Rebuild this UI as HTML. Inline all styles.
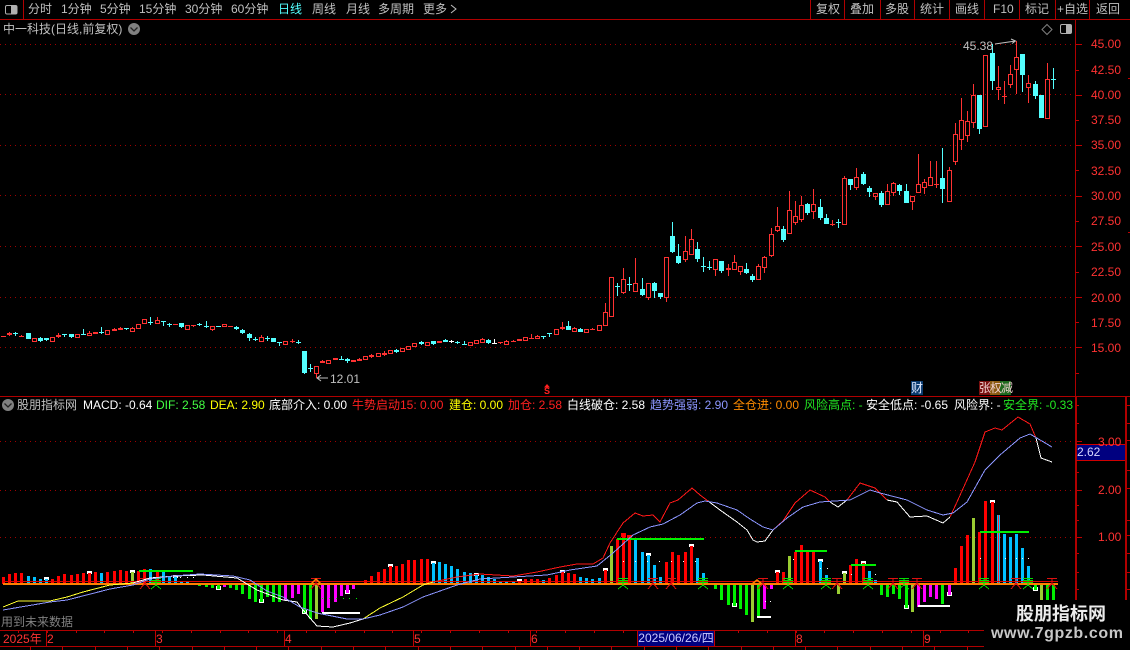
<!DOCTYPE html>
<html lang="zh">
<head>
<meta charset="utf-8">
<title>股朋指标网</title>
<style>
html,body{margin:0;padding:0;background:#000;}
#p{position:relative;width:1130px;height:650px;overflow:hidden;background:#000;font:12px/14px "Liberation Sans","WenQuanYi Zen Hei","Noto Sans CJK SC",sans-serif;color:#c0c0c0;}
#p svg{position:absolute;left:0;top:0;}
.t{position:absolute;white-space:pre;}
.r{color:#ff3232;}
</style>
</head>
<body>
<div id="p">
<svg id="s" width="1130" height="650" viewBox="0 0 1130 650" shape-rendering="crispEdges">
  <g fill="#b00000">
    <rect x="0" y="19" width="1130" height="1"/>
    <rect x="23" y="0" width="1" height="19"/>
    <rect x="810" y="0" width="1" height="19"/><rect x="844" y="0" width="1" height="19"/>
    <rect x="880" y="0" width="1" height="19"/><rect x="914" y="0" width="1" height="19"/>
    <rect x="949" y="0" width="1" height="19"/><rect x="984" y="0" width="1" height="19"/>
    <rect x="1019" y="0" width="1" height="19"/><rect x="1055" y="0" width="1" height="19"/>
    <rect x="1089" y="0" width="1" height="19"/>
    <rect x="0" y="396" width="1130" height="1"/>
    <rect x="1075" y="20" width="1" height="376"/>
    <rect x="1075" y="396" width="2" height="204"/>
    <rect x="1125" y="396" width="2" height="204"/>
    <rect x="0" y="630" width="984" height="1"/>
    <rect x="0" y="646" width="984" height="1"/>
  </g>
  <g id="grid" stroke="#a00000" stroke-width="1" stroke-dasharray="1 4" fill="none">
    <path d="M0 44.5H1075M0 94.5H1075M0 145.5H1075M0 195.5H1075M0 246.5H1075M0 297.5H1075M0 347.5H1075"/>
    <path d="M0 441.5H1075M0 490.5H1075M0 537.5H1075"/>
  </g>
  <!-- small window icons -->
  <g shape-rendering="auto">
    <rect x="5.5" y="5.5" width="11.5" height="8.5" rx="1.5" fill="#000" stroke="#b0b0b0"/>
    <rect x="11" y="6" width="5.5" height="7.5" fill="#b0b0b0"/>
    <rect x="1060.5" y="24.5" width="11" height="9" rx="1.5" fill="#000" stroke="#b0b0b0"/>
    <rect x="1066" y="25" width="5" height="8" fill="#b0b0b0"/>
    <path d="M1047 24.5L1052 29.5L1047 34.5L1042 29.5Z" fill="none" stroke="#808080"/>
    <circle cx="134" cy="29" r="6" fill="#808080"/>
    <path d="M130.5 27.5L134 31L137.5 27.5" fill="none" stroke="#222" stroke-width="1.3"/>
    <circle cx="8" cy="405" r="6" fill="#808080"/>
    <path d="M4.5 403.5L8 407L11.5 403.5" fill="none" stroke="#222" stroke-width="1.3"/>
    <path d="M995 44L1015.5 41M1011 39L1015.5 41L1012 43.5" fill="none" stroke="#c0c0c0"/>
    <path d="M328 378H317M321 375L317 378L321 381" fill="none" stroke="#c0c0c0"/>
    <path d="M547 384L550 387.5H544Z" fill="#ff2020"/>
    <path d="M451 5L456 9L451 13" fill="none" stroke="#c0c0c0"/>
  </g>
  <g id="cd"></g>
  <g id="bars"></g>
  <rect x="3" y="581" width="1055" height="1" fill="#e00000"/>
  <rect x="3" y="583" width="1055" height="2" fill="#ff8000"/>
  <g fill="#00f000">
    <rect x="139" y="570" width="54" height="2"/><rect x="617" y="538" width="87" height="2"/>
    <rect x="795" y="550" width="32" height="2"/><rect x="851" y="564" width="25" height="2"/>
    <rect x="980" y="531" width="49" height="2"/>
  </g>
  <g fill="#fff">
    <rect x="322" y="612" width="38" height="2"/><rect x="757" y="616" width="14" height="2"/><rect x="918" y="605" width="32" height="2"/>
  </g>
  <g id="dots"></g>
  <g id="marks" fill="none" stroke-width="1"></g>
  <g fill="none" stroke-width="1">
    <polyline stroke="#ffff30" points="3,607 18,601 50,601 67,597 83,592 110,585 133,583"/>
    <polyline stroke="#ffff30" points="363,619 380,608 403,597 423,585 433,582"/>
    <polyline stroke="#ff1818" points="433,582 457,577 480,574 513,576 537,572 560,567 577,564 593,564 603,558 610,543 623,523 635,513 643,516 653,515 660,522 670,503 678,500 692,488 700,495 708,501"/>
    <polyline stroke="#ff1818" points="773,530 783,521 795,503 810,490 825,497 830,502"/>
    <polyline stroke="#ff1818" points="847,500 860,483 875,488 887,500"/>
    <polyline stroke="#ff1818" points="950,517 957,502 975,462 985,432 995,428 1002,430 1018,417 1030,424 1036,438"/>
    <polyline stroke="#fff" points="133,583 150,578 175,576 203,575 237,578 257,590 283,600 297,602 303,610 317,626 333,627 350,623 363,619"/>
    <polyline stroke="#fff" points="708,501 720,510 737,522 747,530 753,540 757,542 765,541 773,530"/>
    <polyline stroke="#fff" points="830,502 838,507 847,500"/>
    <polyline stroke="#fff" points="887,500 897,502 910,517 927,516 943,523 950,517"/>
    <polyline stroke="#fff" points="1036,438 1041,458 1052,462"/>
    <polyline stroke="#8c96ff" points="3,610 50,602 67,600 110,589 133,585 150,579 173,576 200,574 233,576 250,580 267,591 283,597 300,607 317,613 347,619 363,619 380,615 403,607 423,597 457,585 480,579 513,577 547,575 570,570 597,566 613,553 633,535 650,527 663,524 680,515 697,503 705,501 717,503 737,510 750,519 763,527 773,530 787,518 803,507 820,502 850,500 870,490 880,493 907,500 927,510 943,515 953,513 967,502 985,470 1000,455 1020,438 1030,434 1052,447"/>
  </g>
  <g shape-rendering="auto" fill="none" stroke="#ff8000" stroke-width="1.5">
    <path d="M311 584L316 579L321 584M752 584L757 580L762 584"/>
  </g>
  <g id="ticks"></g>
  <rect x="1077" y="444" width="48" height="16" fill="#000080"/>
  <rect x="1076" y="444" width="49" height="1" fill="#d00000"/>
  <rect x="1076" y="460" width="49" height="1" fill="#d00000"/>
  <g fill="#8a3a00">
    <rect x="911" y="381" width="12" height="14" fill="#0a3a6e"/>
    <rect x="979" y="381" width="11" height="14" fill="#7a1010"/>
    <rect x="990" y="381" width="10" height="14" fill="#8a5a10"/>
    <rect x="1000" y="381" width="11" height="14" fill="#1e6a1e"/>
  </g>
  <rect x="984" y="600" width="146" height="50" fill="#000"/>
</svg>

<span class="t" style="left:28px;top:2px">分时</span>
<span class="t" style="left:61px;top:2px">1分钟</span>
<span class="t" style="left:100px;top:2px">5分钟</span>
<span class="t" style="left:139px;top:2px">15分钟</span>
<span class="t" style="left:185px;top:2px">30分钟</span>
<span class="t" style="left:231px;top:2px">60分钟</span>
<span class="t" style="left:278px;top:2px;color:#54ffff">日线</span>
<span class="t" style="left:312px;top:2px">周线</span>
<span class="t" style="left:346px;top:2px">月线</span>
<span class="t" style="left:378px;top:2px">多周期</span>
<span class="t" style="left:423px;top:2px">更多</span>

<span class="t" style="left:816px;top:2px">复权</span>
<span class="t" style="left:850px;top:2px">叠加</span>
<span class="t" style="left:885px;top:2px">多股</span>
<span class="t" style="left:920px;top:2px">统计</span>
<span class="t" style="left:955px;top:2px">画线</span>
<span class="t" style="left:993px;top:2px">F10</span>
<span class="t" style="left:1025px;top:2px">标记</span>
<span class="t" style="left:1057px;top:2px">+自选</span>
<span class="t" style="left:1096px;top:2px">返回</span>

<span class="t" style="left:3px;top:22px">中一科技(日线,前复权)</span>

<span class="t" style="left:963px;top:39px">45.38</span>
<span class="t" style="left:330px;top:372px">12.01</span>

<span class="t r" style="left:1091px;top:37px">45.00</span>
<span class="t r" style="left:1091px;top:63px">42.50</span>
<span class="t r" style="left:1091px;top:88px">40.00</span>
<span class="t r" style="left:1091px;top:113px">37.50</span>
<span class="t r" style="left:1091px;top:138px">35.00</span>
<span class="t r" style="left:1091px;top:164px">32.50</span>
<span class="t r" style="left:1091px;top:189px">30.00</span>
<span class="t r" style="left:1091px;top:214px">27.50</span>
<span class="t r" style="left:1091px;top:240px">25.00</span>
<span class="t r" style="left:1091px;top:265px">22.50</span>
<span class="t r" style="left:1091px;top:291px">20.00</span>
<span class="t r" style="left:1091px;top:316px">17.50</span>
<span class="t r" style="left:1091px;top:341px">15.00</span>

<span class="t" style="left:544px;top:387px;color:#ff2020;font-size:9px;line-height:9px;font-weight:bold">S</span>
<span class="t" style="left:911px;top:381px;color:#dfe8ff">财</span>
<span class="t" style="left:979px;top:381px;color:#f0d0d0;letter-spacing:-1px">张权减</span>

<span class="t" style="left:17px;top:398px">股朋指标网</span>
<span class="t" style="left:83px;top:398px;color:#fff">MACD: -0.64</span>
<span class="t" style="left:156px;top:398px;color:#44ff44">DIF: 2.58</span>
<span class="t" style="left:210px;top:398px;color:#ffff00">DEA: 2.90</span>
<span class="t" style="left:269px;top:398px;color:#fff">底部介入: 0.00</span>
<span class="t" style="left:352px;top:398px;color:#ff2020">牛势启动15: 0.00</span>
<span class="t" style="left:449px;top:398px;color:#ffff00">建仓: 0.00</span>
<span class="t" style="left:508px;top:398px;color:#ff2020">加仓: 2.58</span>
<span class="t" style="left:567px;top:398px;color:#fff">白线破仓: 2.58</span>
<span class="t" style="left:650px;top:398px;color:#8c96ff">趋势强弱: 2.90</span>
<span class="t" style="left:733px;top:398px;color:#ff8c00">全仓进: 0.00</span>
<span class="t" style="left:804px;top:398px;color:#22e622">风险高点: -</span>
<span class="t" style="left:866px;top:398px;color:#fff">安全低点: -0.65</span>
<span class="t" style="left:954px;top:398px;color:#fff">风险界: -</span>
<span class="t" style="left:1003px;top:398px;color:#22e622">安全界: -0.33</span>

<span class="t r" style="left:1098px;top:435px">3.00</span>
<span class="t" style="left:1077px;top:445px;color:#d8d8ff">2.62</span>
<span class="t r" style="left:1098px;top:483px">2.00</span>
<span class="t r" style="left:1098px;top:530px">1.00</span>

<span class="t" style="left:1px;top:615px;color:#808080">用到未来数据</span>
<span class="t r" style="left:3px;top:632px">2025年</span>
<span class="t r" style="left:47px;top:632px">2</span>
<span class="t r" style="left:156px;top:632px">3</span>
<span class="t r" style="left:285px;top:632px">4</span>
<span class="t r" style="left:414px;top:632px">5</span>
<span class="t r" style="left:531px;top:632px">6</span>
<span class="t" style="left:637px;top:631px;width:76px;height:15px;background:#00007f;color:#c8c8ff;text-align:center;border-left:1px solid #c00000;border-right:1px solid #c00000">2025/06/26/四</span>
<span class="t r" style="left:796px;top:632px">8</span>
<span class="t r" style="left:924px;top:632px">9</span>

<span class="t" style="left:1016px;top:603px;color:#ececec;font-size:18px;line-height:22px;font-weight:bold">股朋指标网</span>
<span class="t" style="left:991px;top:625px;color:#c8c8c8;font-size:16px;line-height:18px;font-weight:bold;letter-spacing:0.6px">www.7gpzb.com</span>
</div>
<script>
(function(){
var NS="http://www.w3.org/2000/svg";
function X(i){return Math.floor(3.5+6.14*i);}
function R(g,x,y,w,h,f){var r=document.createElementNS(NS,"rect");r.setAttribute("x",x);r.setAttribute("y",y);r.setAttribute("width",w);r.setAttribute("height",h);r.setAttribute("fill",f);g.appendChild(r);}
var RED="#ff3232",CY="#54ffff",WH="#ffffff";
var C=[[336,336,336,337,1],[333,335,332,336,1],[333,334,332,336,2],[336,336,335,337,1],[333,339,333,339,2],[338,341,338,342,0],[338,341,337,342,2],[338,340,338,341,2],[337,341,337,341,0],[335,337,333,338,1],
[334,334,334,337,2],[334,337,334,338,2],[334,337,334,337,0],[334,334,329,335,2],[333,335,331,335,0],[332,334,332,334,1],[332,333,327,334,2],[330,334,330,334,0],[329,331,328,331,1],[328,329,327,330,0],
[328,328,328,330,2],[328,331,327,331,0],[324,328,324,328,0],[319,323,319,323,0],[322,323,317,325,2],[320,323,317,323,0],[321,321,321,326,2],[324,324,323,327,2],[324,324,324,324,1],[323,327,323,328,2],
[325,329,325,329,0],[325,326,325,327,1],[324,325,323,326,2],[326,326,321,328,2],[326,329,326,331,0],[326,326,326,327,2],[324,326,324,326,0],[326,326,326,327,1],[327,329,326,330,2],[330,333,329,334,2],
[334,338,333,341,2],[339,339,337,341,2],[337,341,335,341,0],[338,338,336,341,2],[338,342,338,342,2],[342,342,342,346,2],[341,344,341,344,0],[341,341,339,343,1],[342,342,340,344,2],[351,373,351,374,2],
[368,368,364,372,2],[366,373,366,378,0],[361,363,360,363,1],[360,363,360,363,0],[358,360,358,360,1],[359,359,356,360,2],[359,361,358,363,2],[360,362,360,362,1],[359,361,358,361,1],[356,359,356,359,0],
[355,357,354,358,1],[353,356,353,356,0],[353,355,351,356,1],[350,353,350,353,0],[350,352,349,353,2],[348,351,348,351,0],[346,349,346,349,0],[343,346,343,346,0],[342,344,341,345,2],[342,345,342,345,0],
[341,344,341,345,2],[341,343,341,343,1],[340,342,339,342,2],[341,341,340,343,3],[342,342,341,344,2],[344,344,341,345,2],[342,345,342,345,0],[340,343,340,343,0],[339,342,338,342,0],[340,343,339,344,2],
[343,343,339,344,3],[342,342,342,344,1],[341,344,340,344,0],[341,341,340,342,1],[339,341,339,341,1],[337,340,337,341,0],[338,338,334,339,1],[336,338,335,338,0],[336,336,336,339,2],[333,333,333,337,2],
[329,334,329,334,0],[327,329,322,330,1],[326,330,321,330,2],[328,331,327,331,0],[329,332,328,332,2],[329,332,329,333,0],[329,329,328,330,1],[325,330,325,331,0],[312,325,303,326,0],[277,316,277,316,0],
[286,286,283,296,2],[279,292,268,294,0],[284,284,277,291,2],[283,291,258,291,0],[289,295,278,296,2],[283,297,283,300,0],[283,291,282,298,2],[293,297,293,299,2],[257,297,257,302,0],[236,252,222,253,2],
[256,263,244,264,2],[251,259,236,262,0],[239,254,229,254,0],[249,259,242,262,2],[266,266,257,272,2],[267,267,261,270,2],[259,269,259,276,0],[261,271,261,273,2],[268,270,264,276,1],[262,269,255,269,0],
[266,271,266,275,0],[269,273,263,274,2],[276,280,274,282,2],[266,279,264,280,0],[257,267,256,273,0],[234,255,228,257,0],[226,230,207,232,0],[229,240,226,242,2],[210,233,191,233,0],[216,222,201,225,0],
[205,219,196,222,0],[204,213,203,215,2],[204,211,189,219,0],[207,218,199,220,2],[218,224,214,224,2],[224,224,220,226,1],[222,222,219,228,2],[178,224,176,224,0],[179,185,179,190,2],[177,187,168,190,0],
[174,184,172,185,2],[188,192,186,197,2],[193,196,193,200,0],[193,205,191,207,2],[191,204,184,205,0],[183,192,182,196,0],[185,191,184,195,2],[191,203,184,203,2],[196,201,196,210,0],[184,192,154,192,0],
[182,187,179,194,0],[177,185,161,185,0],[184,184,161,188,1],[178,189,148,203,2],[170,201,167,201,0],[134,161,123,165,0],[120,139,98,150,0],[121,135,111,142,0],[95,122,84,128,0],[95,129,95,134,2],
[55,126,55,127,0],[53,81,44,90,2],[87,89,66,100,0],[96,97,81,104,1],[74,84,65,88,0],[57,69,41,94,0],[54,75,54,92,2],[83,87,75,103,0],[84,96,81,99,2],[95,118,95,118,2],[79,118,63,118,0],[79,79,68,89,2]];
var g=document.getElementById("cd");
C.forEach(function(c,i){
  var x=X(i),t=c[0],b=c[1],h=c[2],l=c[3],k=c[4];
  var col=k==2?CY:(k==3?WH:RED);
  if(h<t)R(g,x,h,1,t-h,col);
  if(l>b)R(g,x,b,1,l-b,col);
  if(k==0){
    R(g,x-2,t,5,1,col);R(g,x-2,b,5,1,col);R(g,x-2,t,1,b-t+1,col);R(g,x+2,t,1,b-t+1,col);
  }else{
    R(g,x-2,t,5,Math.max(b-t,1),col);
  }
});
var S=("577r 574r 573r 573r 576b 577b 579b 578b* 579r 576r 574r 575r 574r 573r 572r* 572r 573b 572r 571r 570r 571r 571o* 571r 569r 569b 570r 572b 576b 576b* 581b 582b - "+
"586g 587g 588g 589g* 587m 588g 590g 594g 599g 602g 602g* 597g 602g 602g 600m 598m 594m 613g* 619g 619o 612m 608m 602m 596m 593m* 589m - 580r 576r 572r "+
"569r 565r* 566r 564r 560r 560r 559r 559r 562b* 562b 564b 566b 569b 572b 573b 574b* 575b 577b 579b 581b 582b 582b 580r* 579r 579r 579r 580b 578r 575r 571r* 573r 574r 577b 578b 579b 578b 569r* 546o 539r 533r 535r 539b 552b 554b* 565b 577b 562r 552r 555r 552r 545r* 558b 573b - "+
"589g 600g 605g 606g* 609g 615g 622o 618g 609m 589m 571r* 572r 556o 552r 545r 550r 552r 560b* 575b - 594o 572o* 565r 559r 562r* 571b 580b 595g 597g 594g 599g 608g* 612o 607m 602m 597m 599m 604g 595m* 568r 546r 535r 518o 532r 501r 501r* 515b 534b 537b 534b 548b 566b 590g* 600o 600g 600g").split(" ");
var cols={r:"#ff0000",b:"#00c0ff",g:"#00f000",m:"#ff00ff",o:"#9acd32"};
var bg=document.getElementById("bars");
S.forEach(function(s,i){
  if(s=="-")return;
  var y=parseInt(s,10),k=s.charAt(3),cap=s.charAt(4)=="*",x=X(i);
  var z=584;
  if(y<z)R(bg,x-1,y,3,z-y,cols[k]);else R(bg,x-1,z,3,y-z,cols[k]);
  if(cap){
    if(y<z){R(bg,x-2,y-1,5,3,"#fff");R(bg,x-1,y+1,3,1,cols[k]);}
    else{R(bg,x-2,y-3,1,4,"#fff");R(bg,x+2,y-3,1,4,"#fff");R(bg,x-2,y,5,1,"#fff");}
  }
  if(i==101||i==102)R(bg,x-2,y,5,4,"#ff0000");
  if(i==162)R(bg,x,y,1,z-y,"#ff3030");
});
var d=document.getElementById("dots"),p=[[180,577],[187,577],[193,577],[322,598],[329,598],[336,598],[343,598],[349,598],[356,598],[765,601],[770,601],[793,559],[820,568],[827,568],[851,574],[875,574],[980,558],[1005,558],[1016,558],[1022,558],[1028,558]],q;
for(q=617;q<704;q+=6)if(q%12!=5)p.push([q,561]);
p.forEach(function(a){R(d,a[0],a[1],1,1,a[1]==598?"#00f000":"#fff");});
var m=document.getElementById("marks");
function P(dd,col){var e=document.createElementNS(NS,"path");e.setAttribute("d",dd);e.setAttribute("stroke",col);m.appendChild(e);}
[156,623,703,788,826,868,904,984,1028].forEach(function(x){
  P("M"+(x-5)+" 578.5h10M"+(x-5)+" 580.5h10M"+(x-5)+" 582.5h10M"+x+" 578v7M"+x+" 585L"+(x-5)+" 589M"+x+" 585L"+(x+5)+" 589","#00e000");
});
[145,316,653,671,763,837,893,917,1016,1052].forEach(function(x){
  P("M"+(x-5)+" 578.5h10M"+x+" 579v6M"+x+" 583L"+(x-5)+" 589M"+x+" 583L"+(x+5)+" 589","#e01010");
});
var tk=document.getElementById("ticks"),TC="#c00000";
[44,95,145,196,246,297,347].forEach(function(y){R(tk,1076,y,6,1,TC);});
[70,120,170,221,272,322,373].forEach(function(y){R(tk,1076,y,3,1,TC);});
[441,490,537].forEach(function(y){R(tk,1077,y,5,1,TC);});
[405,423,458,472,505,520,553,572,589].forEach(function(y){R(tk,1077,y,2,1,TC);});
[78,232].forEach(function(y){R(tk,1128,y,2,1,TC);});
[405,423,440,470,488,520,535,553,572,589].forEach(function(y){R(tk,1127,y,3,1,TC);});
[46,155,284,413,530,795,923].forEach(function(x){R(tk,x,630,1,16,TC);});
for(var a=18;a<984;a+=28.8)if(a<637||a>714)R(tk,Math.round(a),631,1,2,TC);
for(var b=30;b<984;b+=32.3)R(tk,Math.round(b),647,1,3,TC);
})();
</script>
</body>
</html>
